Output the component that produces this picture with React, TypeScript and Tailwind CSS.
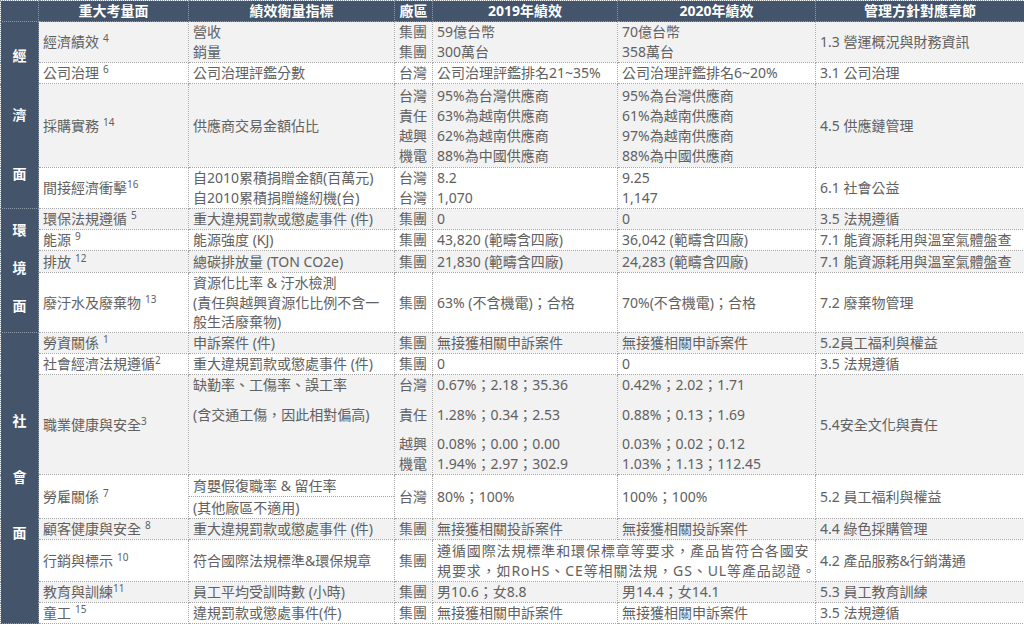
import React from 'react'

type Row = {
  topic: string
  sup: string
  gap?: boolean
  metric: string[]
  site: string[]
  y2019: string[]
  y2020?: string[]
  chapter: string
  h: string
  spaced?: boolean
  split?: boolean
  span?: boolean
  tight?: boolean
}

// h = row height minus the 1px collapsed border
const rows: Row[] = [
  { topic: '經濟績效', sup: '4', gap: true, metric: ['營收', '銷量'], site: ['集團', '集團'], y2019: ['59億台幣', '300萬台'], y2020: ['70億台幣', '358萬台'], chapter: '1.3 營運概況與財務資訊', h: 'h-[40px]' },
  { topic: '公司治理', sup: '6', gap: true, metric: ['公司治理評鑑分數'], site: ['台灣'], y2019: ['公司治理評鑑排名21~35%'], y2020: ['公司治理評鑑排名6~20%'], chapter: '3.1 公司治理', h: 'h-[20px]' },
  { topic: '採購實務', sup: '14', gap: true, metric: ['供應商交易金額佔比'], site: ['台灣', '責任', '越興', '機電'], y2019: ['95%為台灣供應商', '63%為越南供應商', '62%為越南供應商', '88%為中國供應商'], y2020: ['95%為台灣供應商', '61%為越南供應商', '97%為越南供應商', '88%為中國供應商'], chapter: '4.5 供應鏈管理', h: 'h-[83px]' },
  { topic: '間接經濟衝擊', sup: '16', metric: ['自2010累積捐贈金額(百萬元)', '自2010累積捐贈縫紉機(台)'], site: ['台灣', '台灣'], y2019: ['8.2', '1,070'], y2020: ['9.25', '1,147'], chapter: '6.1 社會公益', h: 'h-[40px]' },
  { topic: '環保法規遵循', sup: '5', gap: true, metric: ['重大違規罰款或懲處事件 (件)'], site: ['集團'], y2019: ['0'], y2020: ['0'], chapter: '3.5 法規遵循', h: 'h-[20px]' },
  { topic: '能源', sup: '9', gap: true, metric: ['能源強度 (KJ)'], site: ['集團'], y2019: ['43,820 (範疇含四廠)'], y2020: ['36,042 (範疇含四廠)'], chapter: '7.1 能資源耗用與溫室氣體盤查', h: 'h-[20px]' },
  { topic: '排放', sup: '12', gap: true, metric: ['總碳排放量 (TON CO2e)'], site: ['集團'], y2019: ['21,830 (範疇含四廠)'], y2020: ['24,283 (範疇含四廠)'], chapter: '7.1 能資源耗用與溫室氣體盤查', h: 'h-[21px]' },
  { topic: '廢汙水及廢棄物', sup: '13', gap: true, tight: true, metric: ['資源化比率 & 汙水檢測', '(責任與越興資源化比例不含一', '般生活廢棄物)'], site: ['集團'], y2019: ['63% (不含機電)；合格'], y2020: ['70%(不含機電)；合格'], chapter: '7.2 廢棄物管理', h: 'h-[59px]' },
  { topic: '勞資關係', sup: '1', gap: true, metric: ['申訴案件 (件)'], site: ['集團'], y2019: ['無接獲相關申訴案件'], y2020: ['無接獲相關申訴案件'], chapter: '5.2員工福利與權益', h: 'h-[20px]' },
  { topic: '社會經濟法規遵循', sup: '2', metric: ['重大違規罰款或懲處事件 (件)'], site: ['集團'], y2019: ['0'], y2020: ['0'], chapter: '3.5 法規遵循', h: 'h-[20px]' },
  { topic: '職業健康與安全', sup: '3', spaced: true, metric: ['缺勤率、工傷率、誤工率', '(含交通工傷，因此相對偏高)'], site: ['台灣', '責任', '越興', '機電'], y2019: ['0.67%；2.18；35.36', '1.28%；0.34；2.53', '0.08%；0.00；0.00', '1.94%；2.97；302.9'], y2020: ['0.42%；2.02；1.71', '0.88%；0.13；1.69', '0.03%；0.02；0.12', '1.03%；1.13；112.45'], chapter: '5.4安全文化與責任', h: 'h-[99px]' },
  { topic: '勞雇關係', sup: '7', gap: true, split: true, metric: ['育嬰假復職率 & 留任率', '(其他廠區不適用)'], site: ['台灣'], y2019: ['80%；100%'], y2020: ['100%；100%'], chapter: '5.2 員工福利與權益', h: 'h-[43px]' },
  { topic: '顧客健康與安全', sup: '8', gap: true, metric: ['重大違規罰款或懲處事件 (件)'], site: ['集團'], y2019: ['無接獲相關投訴案件'], y2020: ['無接獲相關投訴案件'], chapter: '4.4 綠色採購管理', h: 'h-[20px]' },
  { topic: '行銷與標示', sup: '10', gap: true, span: true, metric: ['符合國際法規標準&環保規章'], site: ['集團'], y2019: ['遵循國際法規標準和環保標章等要求，產品皆符合各國安', '規要求，如RoHS、CE等相關法規，GS、UL等產品認證。'], chapter: '4.2 產品服務&行銷溝通', h: 'h-[41px]' },
  { topic: '教育與訓練', sup: '11', metric: ['員工平均受訓時數 (小時)'], site: ['集團'], y2019: ['男10.6；女8.8'], y2020: ['男14.4；女14.1'], chapter: '5.3 員工教育訓練', h: 'h-[20px]' },
  { topic: '童工', sup: '15', gap: true, metric: ['違規罰款或懲處事件(件)'], site: ['集團'], y2019: ['無接獲相關申訴案件'], y2020: ['無接獲相關申訴案件'], chapter: '3.5 法規遵循', h: 'h-[20px]' },
]

const groups: Record<number, { chars: string[]; span: number; cls: string }> = {
  0: { chars: ['經', '濟', '面'], span: 4, cls: 'pt-[24px] gap-[39px]' },
  4: { chars: ['環', '境', '面'], span: 4, cls: 'pt-[11px] gap-[18px]' },
  8: { chars: ['社', '會', '面'], span: 8, cls: 'pt-[78px] gap-[36px]' },
}

const cell = 'px-[4px] py-0 align-middle border border-dotted border-[#a6a6a6] whitespace-nowrap overflow-hidden'

function Lines({ lines, spaced, tight, className = '' }: { lines: string[]; spaced?: boolean; tight?: boolean; className?: string }) {
  return (
    <div className={className}>
      {lines.map((l, i) => (
        <div
          key={i}
          className={`${tight ? 'h-[19.5px] leading-[19.5px]' : 'h-[20px] leading-[20px]'} ${spaced && i === 1 ? 'mt-[10px]' : ''} ${spaced && i === 2 ? 'mt-[9px]' : ''}`}
        >
          {l}
        </div>
      ))}
    </div>
  )
}

export default function App() {
  return (
    <div className="w-[1024px] h-[627px] overflow-hidden bg-white font-['Noto_Sans','Noto_Sans_CJK_TC',sans-serif] text-[14px] text-[#616161]">
      <table className="w-[1024px] table-fixed border-collapse">
        <colgroup>
          <col className="w-[38px]" />
          <col className="w-[150px]" />
          <col className="w-[206px]" />
          <col className="w-[38px]" />
          <col className="w-[185px]" />
          <col className="w-[198px]" />
          <col className="w-[209px]" />
        </colgroup>
        <thead>
          <tr className="bg-[#44546a] text-white font-bold">
            {['', '重大考量面', '績效衡量指標', '廠區', '2019年績效', '2020年績效', '管理方針對應章節'].map((t, i) => (
              <th key={i} className="p-0 text-center border border-dotted border-[#8d98a8] whitespace-nowrap">
                <div className="h-[20px] leading-[20px]">{t}</div>
              </th>
            ))}
          </tr>
        </thead>
        <tbody>
          {rows.map((r, i) => {
            const g = groups[i]
            return (
              <tr key={i} className={i % 2 === 0 ? 'bg-[#f2f2f2]' : 'bg-white'}>
                {g && (
                  <td rowSpan={g.span} className="p-0 bg-[#44546a] border border-dotted border-[#8d98a8] align-top">
                    <div className={`flex flex-col items-center ${g.cls} text-white font-bold`}>
                      {g.chars.map((c, k) => (
                        <span key={k} className="h-[20px] leading-[20px]">{c}</span>
                      ))}
                    </div>
                  </td>
                )}
                <td className={cell}>
                  <div className="h-[20px] leading-[20px]">
                    {r.topic}
                    <sup className={`text-[10px] ${r.gap ? 'ml-[4px]' : ''}`}>{r.sup}</sup>
                  </div>
                </td>
                {r.split ? (
                  <td className={`${cell} !p-0`}>
                    <div className="h-[22px] px-[4px] leading-[21px] border-b border-dotted border-[#a6a6a6]">{r.metric[0]}</div>
                    <div className="h-[21px] px-[4px] leading-[21px]">{r.metric[1]}</div>
                  </td>
                ) : (
                  <td className={`${cell} ${r.spaced ? '!align-top' : ''}`}>
                    <Lines lines={r.metric} spaced={r.spaced} tight={r.tight} />
                  </td>
                )}
                <td className={cell}>
                  <Lines lines={r.site} spaced={r.spaced} />
                </td>
                {r.span ? (
                  <td colSpan={2} className={cell}>
                    <Lines lines={r.y2019} className="tracking-[0.9px]" />
                  </td>
                ) : (
                  <>
                    <td className={cell}>
                      <Lines lines={r.y2019} spaced={r.spaced} />
                    </td>
                    <td className={cell}>
                      <Lines lines={r.y2020 ?? []} spaced={r.spaced} />
                    </td>
                  </>
                )}
                <td className={cell}>
                  <div className={`${r.h} flex items-center`}>
                    <span className="leading-[20px]">{r.chapter}</span>
                  </div>
                </td>
              </tr>
            )
          })}
        </tbody>
      </table>
    </div>
  )
}
